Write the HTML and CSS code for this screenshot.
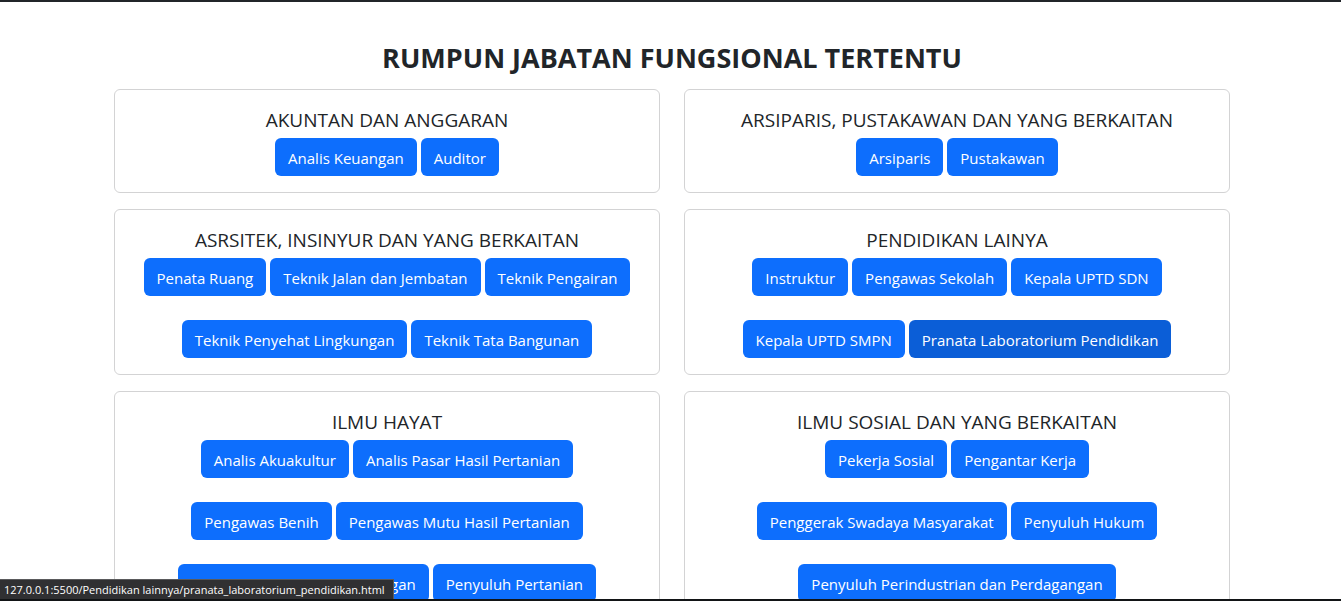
FILE: index.html
```
<!DOCTYPE html>
<html lang="id">
<head>
<meta charset="utf-8">
<title>Rumpun Jabatan Fungsional Tertentu</title>
<link rel="stylesheet" href="styles.css">
</head>
<body class="page">
<main class="content">
  <h1 class="heading">RUMPUN JABATAN FUNGSIONAL TERTENTU</h1>
  <div class="grid">
    <section class="card">
      <h2 class="card-title">AKUNTAN DAN ANGGARAN</h2>
      <div class="rows">
        <div class="row"><a class="btn" href="#">Analis Keuangan</a><a class="btn" href="#">Auditor</a></div>
      </div>
    </section>
    <section class="card">
      <h2 class="card-title">ARSIPARIS, PUSTAKAWAN DAN YANG BERKAITAN</h2>
      <div class="rows">
        <div class="row"><a class="btn" href="#">Arsiparis</a><a class="btn" href="#">Pustakawan</a></div>
      </div>
    </section>
    <section class="card">
      <h2 class="card-title">ASRSITEK, INSINYUR DAN YANG BERKAITAN</h2>
      <div class="rows">
        <div class="row"><a class="btn" href="#">Penata Ruang</a><a class="btn" href="#">Teknik Jalan dan Jembatan</a><a class="btn" href="#">Teknik Pengairan</a></div>
        <div class="row"><a class="btn" href="#">Teknik Penyehat Lingkungan</a><a class="btn" href="#">Teknik Tata Bangunan</a></div>
      </div>
    </section>
    <section class="card">
      <h2 class="card-title">PENDIDIKAN LAINYA</h2>
      <div class="rows">
        <div class="row"><a class="btn" href="#">Instruktur</a><a class="btn" href="#">Pengawas Sekolah</a><a class="btn" href="#">Kepala UPTD SDN</a></div>
        <div class="row"><a class="btn" href="#">Kepala UPTD SMPN</a><a class="btn btn-hover" href="#">Pranata Laboratorium Pendidikan</a></div>
      </div>
    </section>
    <section class="card">
      <h2 class="card-title">ILMU HAYAT</h2>
      <div class="rows">
        <div class="row"><a class="btn" href="#">Analis Akuakultur</a><a class="btn" href="#">Analis Pasar Hasil Pertanian</a></div>
        <div class="row"><a class="btn" href="#">Pengawas Benih</a><a class="btn" href="#">Pengawas Mutu Hasil Pertanian</a></div>
        <div class="row"><a class="btn" href="#">Pengendali Dampak Lingkungan</a><a class="btn" href="#">Penyuluh Pertanian</a></div>
      </div>
    </section>
    <section class="card">
      <h2 class="card-title">ILMU SOSIAL DAN YANG BERKAITAN</h2>
      <div class="rows">
        <div class="row"><a class="btn" href="#">Pekerja Sosial</a><a class="btn" href="#">Pengantar Kerja</a></div>
        <div class="row"><a class="btn" href="#">Penggerak Swadaya Masyarakat</a><a class="btn" href="#">Penyuluh Hukum</a></div>
        <div class="row"><a class="btn" href="#">Penyuluh Perindustrian dan Perdagangan</a></div>
      </div>
    </section>
  </div>
</main>
<div class="status">127.0.0.1:5500/Pendidikan lainnya/pranata_laboratorium_pendidikan.html</div>
</body>
</html>
```
FILE: styles.css
```
* { box-sizing: border-box; }
.page {
  margin: 0;
  height: 100vh;
  overflow: hidden;
  display: flex;
  flex-direction: column;
  border-top: 2px solid #212529;
  border-bottom: 2px solid #121416;
  background: #fff;
  color: #212529;
  font: 15px/24px "Open Sans", "Noto Sans", sans-serif;
}
.content {
  flex: 1;
  min-height: 0;
  overflow: hidden;
  padding: 39px 12px 0 15px;
}
.heading {
  margin: 0 0 14px;
  font-size: 27px;
  line-height: 34px;
  font-weight: 700;
  text-align: center;
}
.grid {
  display: grid;
  grid-template-columns: 1fr 1fr;
  gap: 16px 24px;
  max-width: 1116px;
  margin: 0 auto;
}
.card {
  border: 1px solid #d3d3d4;
  border-radius: 6px;
  padding: 16px;
  text-align: center;
}
.card-title {
  margin: 0 0 4px;
  font-size: 19px;
  line-height: 28px;
  font-weight: 400;
}
.rows {
  display: flex;
  flex-direction: column;
  gap: 24px;
}
.row {
  display: flex;
  justify-content: center;
  gap: 4px;
}
.btn {
  padding: 8px 13px 6px;
  border-radius: 6px;
  background: #0d6efd;
  color: #fff;
  text-decoration: none;
  white-space: nowrap;
}
.btn-hover,
.btn:hover { background: #0b5ed7; }
.status {
  position: fixed;
  left: 0;
  bottom: 2px;
  padding: 1px 8px 0 4px;
  border-top: 1px solid #5a5a5c;
  border-right: 1px solid #5a5a5c;
  background: #303032;
  color: #fff;
  font-size: 11px;
  line-height: 18px;
}
```
